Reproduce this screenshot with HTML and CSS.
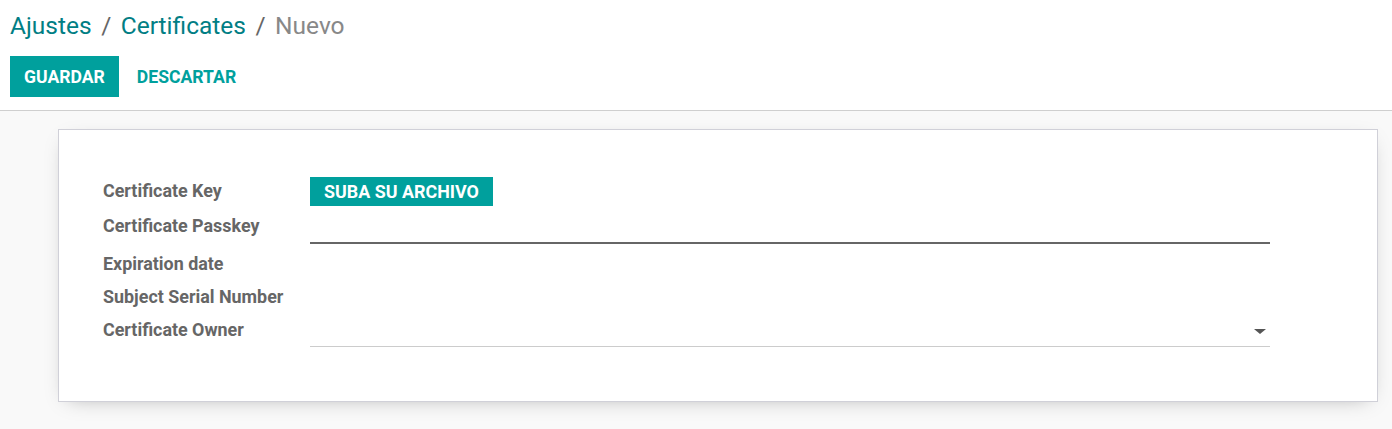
FILE: index.html
```html
<!DOCTYPE html>
<html lang="es">
<head>
<meta charset="utf-8">
<title>Certificates - Nuevo</title>
<link rel="stylesheet" href="styles.css">
</head>
<body>
<div class="control-panel">
  <ol class="breadcrumb">
    <li><a class="crumb-link">Ajustes</a></li>
    <li class="sep">/</li>
    <li><a class="crumb-link">Certificates</a></li>
    <li class="sep">/</li>
    <li class="active">Nuevo</li>
  </ol>
  <div class="buttons">
    <button class="btn btn-primary">GUARDAR</button>
    <button class="btn btn-link">DESCARTAR</button>
  </div>
</div>
<div class="form-area">
  <div class="sheet">
    <div class="form-grid">
      <div class="label">Certificate Key</div>
      <div class="field"><button class="btn-upload">SUBA SU ARCHIVO</button></div>

      <div class="label">Certificate Passkey</div>
      <div class="field"><input class="input-pass" type="text"></div>

      <div class="label">Expiration date</div>
      <div class="field"></div>

      <div class="label">Subject Serial Number</div>
      <div class="field"></div>

      <div class="label">Certificate Owner</div>
      <div class="field"><div class="select"><span class="caret"></span></div></div>
    </div>
  </div>
</div>
</body>
</html>
```

FILE: styles.css
```css
* { box-sizing: border-box; }
html, body {
  margin: 0;
  padding: 0;
  height: 100%;
}
body {
  font-family: Roboto, "Noto Sans", sans-serif;
  background: #f9f9f9;
  color: #4c4c4c;
}
.control-panel {
  background: #fff;
  border-bottom: 1px solid #cfcfcf;
  padding: 8px 10px 13px 10px;
}
.breadcrumb {
  list-style: none;
  margin: 0;
  padding: 0;
  display: flex;
  align-items: center;
  gap: 9.5px;
  font-size: 24.5px;
  line-height: 36px;
}
.crumb-link { color: #017e84; }
.sep { color: #666; }
.active { color: #888; }
.buttons {
  display: flex;
  align-items: center;
  margin-top: 12px;
}
.btn {
  font-family: Roboto, sans-serif;
  font-weight: 700;
  font-size: 17.6px;
  height: 41px;
  border: none;
  padding: 0 14px;
  cursor: pointer;
}
.btn-primary {
  background: #00a09d;
  color: #fff;
}
.btn-link {
  background: transparent;
  color: #00a09d;
  margin-left: 4px;
}
.form-area {
  padding: 18px 14px 20px 58px;
}
.sheet {
  background: #fff;
  border: 1px solid #d0d0d8;
  box-shadow: 0 5px 20px -10px rgba(0,0,0,0.35);
  padding: 47px 44px 52px 44px;
  min-height: 273px;
}
.form-grid {
  display: grid;
  grid-template-columns: 207px 960px;
  grid-template-rows: 29px 42px 33px 33px 34px;
  align-items: center;
}
.label {
  font-weight: 700;
  font-size: 17.9px;
  color: #666;
  margin-top: -3px;
}
.label:first-child {
  margin-top: -2px;
}
.field {
  height: 100%;
  display: flex;
  align-items: flex-start;
}
.btn-upload {
  font-family: Roboto, sans-serif;
  font-weight: 700;
  font-size: 17.9px;
  background: #00a09d;
  color: #fff;
  border: none;
  height: 29px;
  padding: 0 14px;
}
.input-pass {
  width: 100%;
  height: 38px;
  border: none;
  border-bottom: 2px solid #666;
  outline: none;
  background: transparent;
}
.select {
  width: 100%;
  height: 33px;
  border-bottom: 1px solid #ccc;
  position: relative;
}
.caret {
  position: absolute;
  right: 4px;
  top: 15px;
  width: 0;
  height: 0;
  border-left: 6px solid transparent;
  border-right: 6px solid transparent;
  border-top: 5px solid #555;
}
```
